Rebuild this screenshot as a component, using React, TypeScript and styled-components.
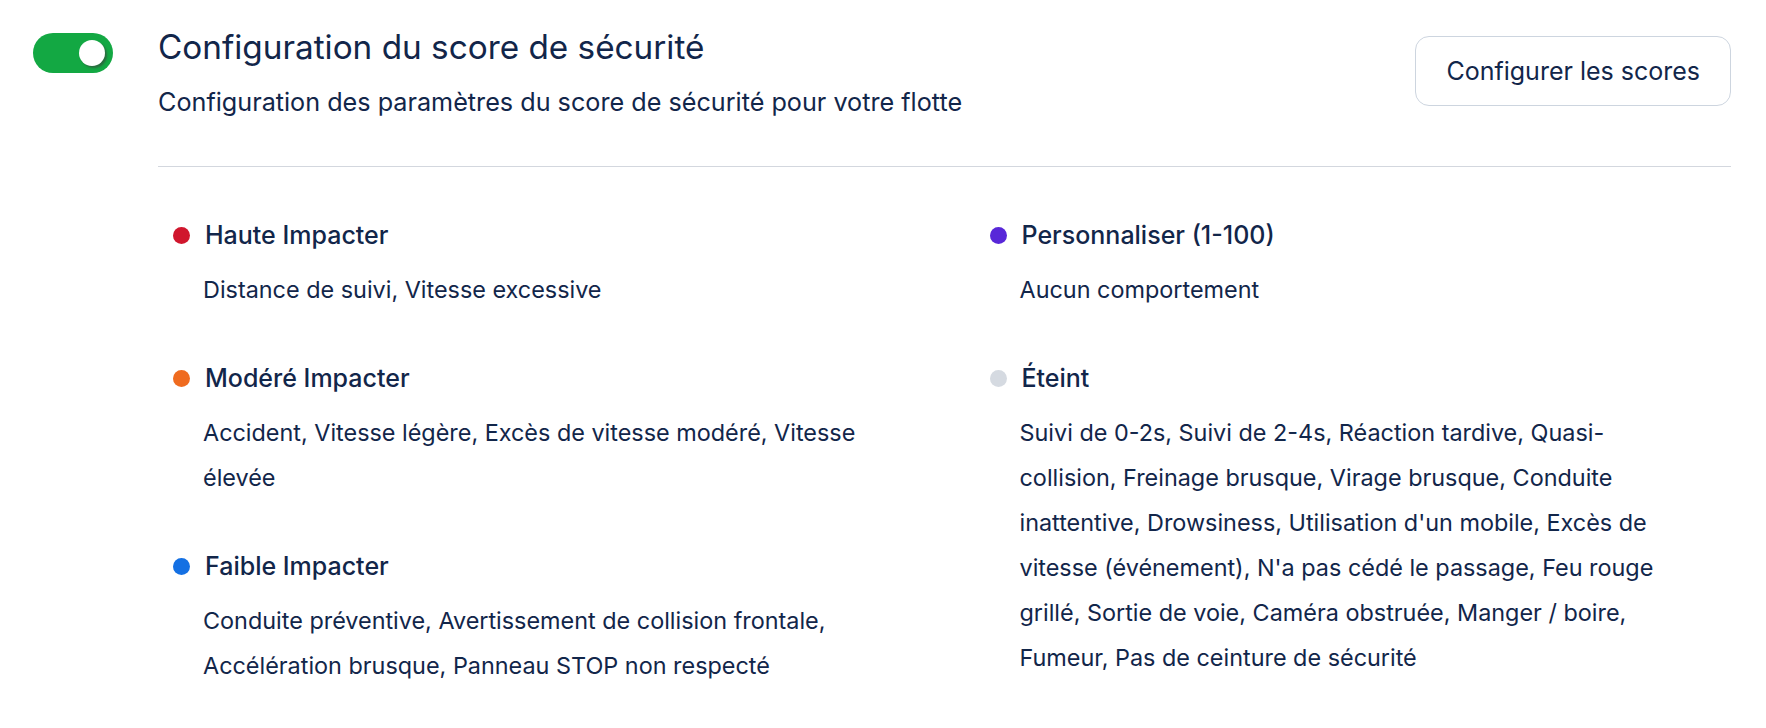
import { useState } from "react"
import styled, { createGlobalStyle } from "styled-components"

const GlobalStyle = createGlobalStyle`
  * { box-sizing: border-box; }
  body {
    margin: 0;
    background: #ffffff;
    font-family: Inter, "Noto Sans", "Liberation Sans", sans-serif;
    color: #12264a;
  }
`

type Group = {
  label: string
  color: string
  items: string
}

const leftGroups: Group[] = [
  { label: "Haute Impacter", color: "#d0162d", items: "Distance de suivi, Vitesse excessive" },
  {
    label: "Modéré Impacter",
    color: "#ef6b1f",
    items: "Accident, Vitesse légère, Excès de vitesse modéré, Vitesse élevée",
  },
  {
    label: "Faible Impacter",
    color: "#1470e3",
    items: "Conduite préventive, Avertissement de collision frontale, Accélération brusque, Panneau STOP non respecté",
  },
]

const rightGroups: Group[] = [
  { label: "Personnaliser (1-100)", color: "#5827d8", items: "Aucun comportement" },
  {
    label: "Éteint",
    color: "#d5dae1",
    items:
      "Suivi de 0-2s, Suivi de 2-4s, Réaction tardive, Quasi-\ncollision, Freinage brusque, Virage brusque, Conduite inattentive, Drowsiness, Utilisation d'un mobile, Excès de vitesse (événement), N'a pas cédé le passage, Feu rouge grillé, Sortie de voie, Caméra obstruée, Manger / boire, Fumeur, Pas de ceinture de sécurité",
  },
]

const App = () => {
  const [on, setOn] = useState(true)

  const renderColumn = (groups: Group[]) => (
    <Column>
      {groups.map((g) => (
        <Item key={g.label}>
          <Heading>
            <Dot $color={g.color} />
            {g.label}
          </Heading>
          <Behaviours>{g.items}</Behaviours>
        </Item>
      ))}
    </Column>
  )

  return (
    <>
      <GlobalStyle />
      <Page>
        <Switch role="switch" aria-checked={on} $on={on} onClick={() => setOn(!on)}>
          <Knob $on={on} />
        </Switch>
        <Main>
          <Header>
            <Titles>
              <Title>Configuration du score de sécurité</Title>
              <Subtitle>Configuration des paramètres du score de sécurité pour votre flotte</Subtitle>
            </Titles>
            <Button>Configurer les scores</Button>
          </Header>
          <Divider />
          <Grid>
            {renderColumn(leftGroups)}
            {renderColumn(rightGroups)}
          </Grid>
        </Main>
      </Page>
    </>
  )
}

export default App

const Page = styled.div`
  display: flex;
  align-items: flex-start;
  gap: 45px;
  padding: 33px 35px 40px 33px;
`

const Switch = styled.button<{ $on: boolean }>`
  flex: none;
  width: 80px;
  height: 40px;
  padding: 0 8px;
  border: none;
  border-radius: 20px;
  background: ${(p) => (p.$on ? "#13a843" : "#cfd5dd")};
  display: flex;
  align-items: center;
  justify-content: ${(p) => (p.$on ? "flex-end" : "flex-start")};
  cursor: pointer;
`

const Knob = styled.span<{ $on: boolean }>`
  width: 26px;
  height: 26px;
  border-radius: 50%;
  background: #ffffff;
  box-shadow: 2px 2px 2px rgba(60, 60, 60, 0.55);
`

const Main = styled.div`
  flex: 1;
  min-width: 0;
`

const Header = styled.div`
  display: flex;
  justify-content: space-between;
  align-items: flex-start;
`

const Titles = styled.div`
  display: flex;
  flex-direction: column;
`

const Title = styled.h1`
  margin: 0;
  font-size: 33.3px;
  line-height: 28px;
  font-weight: 400;
  color: #12264a;
`

const Subtitle = styled.p`
  margin: 27px 0 0;
  font-size: 25.2px;
  line-height: 28px;
  color: #12264a;
`

const Button = styled.button`
  margin-top: 3px;
  height: 70px;
  padding: 0 30px;
  background: #ffffff;
  border: 1px solid #cdd5df;
  border-radius: 14px;
  font-family: inherit;
  font-size: 25px;
  color: #12264a;
  cursor: pointer;
`

const Divider = styled.hr`
  margin: 50px 0 0;
  border: none;
  border-top: 1px solid #d3d7de;
`

const Grid = styled.div`
  display: grid;
  grid-template-columns: 1fr 1fr;
  column-gap: 90px;
  padding: 52px 15px 0;
`

const Column = styled.div`
  display: flex;
  flex-direction: column;
  gap: 50px;
`

const Item = styled.div`
  display: flex;
  flex-direction: column;
`

const Heading = styled.div`
  display: flex;
  align-items: center;
  gap: 15px;
  font-size: 25px;
  line-height: 32px;
  font-weight: 500;
  color: #12264a;
`

const Dot = styled.span<{ $color: string }>`
  flex: none;
  width: 17px;
  height: 17px;
  border-radius: 50%;
  background: ${(p) => p.$color};
`

const Behaviours = styled.p`
  margin: 16px 0 0;
  padding-left: 30px;
  font-size: 23.4px;
  line-height: 45px;
  white-space: pre-line;
  color: #12264a;
`
